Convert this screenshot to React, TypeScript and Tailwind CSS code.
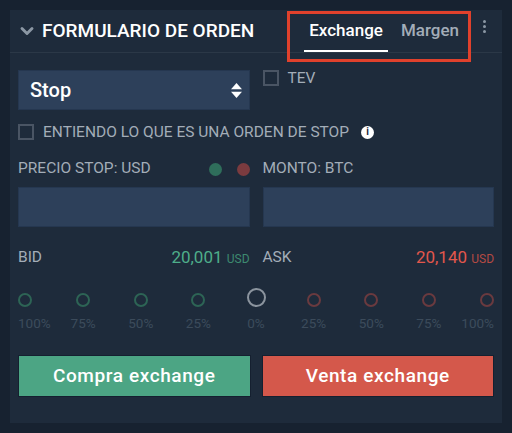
import { ChevronDown } from 'lucide-react';

const steps = [
  { label: '100%', tone: 'buy' },
  { label: '75%', tone: 'buy' },
  { label: '50%', tone: 'buy' },
  { label: '25%', tone: 'buy' },
  { label: '0%', tone: 'mid' },
  { label: '25%', tone: 'sell' },
  { label: '50%', tone: 'sell' },
  { label: '75%', tone: 'sell' },
  { label: '100%', tone: 'sell' },
];

function Box() {
  return <span className="block h-[16px] w-[16px] shrink-0 border-2 border-[#4a5564]" />;
}

export default function App() {
  return (
    <main className="relative h-[433px] w-[512px] overflow-hidden bg-[#172230] pt-[10px] pl-[10px]" style={{ fontFamily: 'Roboto, "Liberation Sans", sans-serif' }}>
      <div className="h-[413px] w-[492px] bg-[#1e2b3b]">
        {/* header */}
        <div className="flex h-[43px] items-center border-b border-[#2b3847] pl-[7px] pr-[16px]">
          <ChevronDown className="h-[20px] w-[20px] text-[#8b97a4]" strokeWidth={3.5} />
          <h2 className="ml-[5px] text-[19px] font-medium text-white">FORMULARIO DE ORDEN</h2>
          <div className="ml-auto flex h-full items-stretch">
            <div className="relative flex items-center px-[5px] text-[17px] font-medium text-white">
              Exchange
              <span className="absolute bottom-0 left-0 right-0 h-[2px] bg-white" />
            </div>
            <div className="ml-[13px] flex items-center text-[17px] font-medium text-[#a3adb8]">Margen</div>
            <div className="ml-[24px] -mt-[10px] flex flex-col items-center gap-[2px] self-center">
              <span className="h-[3px] w-[3px] rounded-full bg-[#8b97a4]" />
              <span className="h-[3px] w-[3px] rounded-full bg-[#8b97a4]" />
              <span className="h-[3px] w-[3px] rounded-full bg-[#8b97a4]" />
            </div>
          </div>
        </div>

        <div className="px-[8px] pt-[17px]">
          <div className="grid grid-cols-2 gap-x-[13px]">
            <div className="flex h-[40px] items-center justify-between border border-[#253750] bg-[#2d405a] pl-[11px] pr-[7px]">
              <span className="text-[20px] font-medium text-white">Stop</span>
              <svg width="11" height="15" viewBox="0 0 11 15">
                <path d="M5.5 0 L11 6.3 H0 Z" fill="#fff" />
                <path d="M5.5 15 L11 8.7 H0 Z" fill="#fff" />
              </svg>
            </div>
            <div className="flex items-start gap-[9px]">
              <Box />
              <span className="text-[15.5px] leading-[16px] text-[#a3adb8]">TEV</span>
            </div>
          </div>

          <div className="mt-[13px] flex items-center">
            <Box />
            <span className="ml-[9px] text-[15.5px] leading-[18px] text-[#a3adb8]">ENTIENDO LO QUE ES UNA ORDEN DE STOP</span>
            <span className="ml-[12px] flex h-[13px] w-[13px] items-center justify-center rounded-full bg-white text-[10px] font-bold leading-none text-[#1e2b3b]">i</span>
          </div>

          <div className="mt-[19px] grid grid-cols-2 gap-x-[13px]">
            <div>
              <div className="flex h-[18px] items-center justify-between text-[15.5px] text-[#a3adb8]">
                <span>PRECIO STOP: USD</span>
                <span className="flex gap-[15px]">
                  <span className="h-[13px] w-[13px] rounded-full bg-[#2f6e5b]" />
                  <span className="h-[13px] w-[13px] rounded-full bg-[#7b3b3f]" />
                </span>
              </div>
              <div className="mt-[9px] h-[40px] border border-[#253750] bg-[#2d405a]" />
              <div className="mt-[21px] flex h-[20px] items-center justify-between">
                <span className="text-[15.5px] text-[#a3adb8]">BID</span>
                <span className="text-[17px] text-[#4eae8a]">20,001 <span className="text-[12px] text-[#3d8a70]">USD</span></span>
              </div>
            </div>
            <div>
              <div className="flex h-[18px] items-center text-[15.5px] text-[#a3adb8]">MONTO: BTC</div>
              <div className="mt-[9px] h-[40px] border border-[#253750] bg-[#2d405a]" />
              <div className="mt-[21px] flex h-[20px] items-center justify-between">
                <span className="text-[15.5px] text-[#a3adb8]">ASK</span>
                <span className="text-[17px] text-[#e2574c]">20,140 <span className="text-[12px] text-[#b44a43]">USD</span></span>
              </div>
            </div>
          </div>

          <div className="mt-[20px] flex justify-between">
            {steps.map((s, i) => (
              <div
                key={i}
                className={`flex w-[15px] flex-col ${i === 0 ? 'items-start' : i === steps.length - 1 ? 'items-end' : 'items-center'}`}
              >
                <div className="flex h-[19px] items-center justify-center">
                  {s.tone === 'mid' ? (
                    <span className="h-[19px] w-[19px] shrink-0 rounded-full border-2 border-[#8b949e]" />
                  ) : (
                    <span
                      className={`mt-[4px] h-[14px] w-[14px] shrink-0 rounded-full border-2 ${s.tone === 'buy' ? 'border-[#2d6455]' : 'border-[#6a3a3f]'}`}
                    />
                  )}
                </div>
                <span className="mt-[6px] whitespace-nowrap text-[13.5px] text-[#3c4b5b]">{s.label}</span>
              </div>
            ))}
          </div>

          <div className="mt-[22px] grid grid-cols-2 gap-x-[11px]">
            <button className="h-[42px] border border-[#152030] bg-[#4ca584] text-[19px] font-medium tracking-[0.6px] text-white">Compra exchange</button>
            <button className="h-[42px] border border-[#152030] bg-[#d4584b] text-[19px] font-medium tracking-[0.6px] text-white">Venta exchange</button>
          </div>
        </div>
      </div>

      {/* annotation box */}
      <div className="absolute left-[287px] top-[11px] h-[51px] w-[184px] border-[3px] border-[#e0412c]" />
    </main>
  );
}
